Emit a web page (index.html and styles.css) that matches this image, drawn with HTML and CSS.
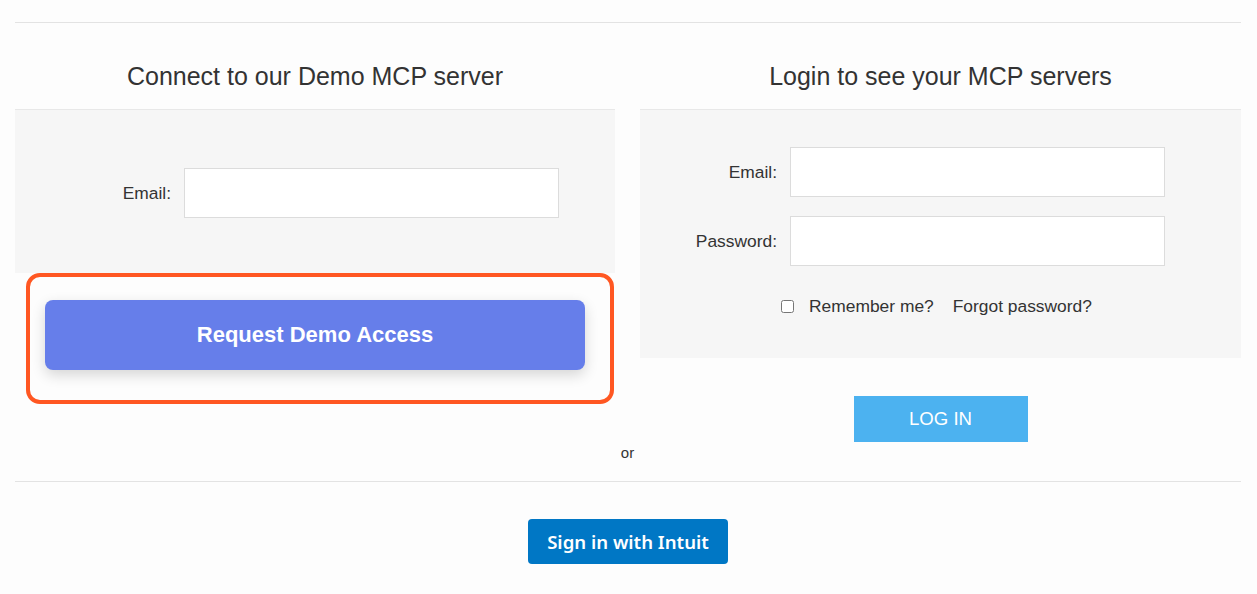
FILE: index.html
```html
<!DOCTYPE html>
<html lang="en">
<head>
  <meta charset="UTF-8" />
  <meta name="viewport" content="width=device-width, initial-scale=1.0"/>
  <title>MCP Servers - Sign in</title>
  <link rel="stylesheet" href="styles.css">
</head>
<body>
  <div class="page">
    <hr class="rule top">

    <div class="columns">
      <section class="col">
        <h2>Connect to our Demo MCP server</h2>
        <div class="panel demo">
          <div class="row">
            <label for="demo-email">Email:</label>
            <input id="demo-email" type="email">
          </div>
        </div>
        <div class="highlight">
          <button class="demo-btn">Request Demo Access</button>
        </div>
      </section>

      <div class="or"><span>or</span></div>

      <section class="col right">
        <h2>Login to see your MCP servers</h2>
        <div class="panel login">
          <div class="row">
            <label for="email">Email:</label>
            <input id="email" type="email">
          </div>
          <div class="row">
            <label for="password">Password:</label>
            <input id="password" type="password">
          </div>
          <div class="options">
            <input id="remember" type="checkbox">
            <label for="remember">Remember me?</label>
            <a href="#">Forgot password?</a>
          </div>
        </div>
        <button class="login-btn">LOG IN</button>
      </section>
    </div>

    <hr class="rule bottom">

    <div class="external">
      <button class="intuit-btn">Sign in with Intuit</button>
    </div>
  </div>
</body>
</html>
```

FILE: styles.css
```css
body {
  margin: 0;
  background-color: #fdfdfd;
  color: #333;
  font-family: 'Liberation Sans', Arial, sans-serif;
}
.page {
  width: 1226px;
  margin-left: 15px;
}
.rule {
  border: none;
  border-top: 1px solid #e3e3e3;
  margin: 0;
}
.rule.top {
  margin-top: 22px;
}
.rule.bottom {
  margin-top: 20px;
}
.columns {
  display: grid;
  grid-template-columns: 600px 25px 601px;
}
h2 {
  margin: 0;
  padding: 39px 0 19px;
  font-size: 25px;
  line-height: 28px;
  font-weight: normal;
  text-align: center;
  color: #333;
}
.panel {
  background-color: #f6f6f6;
  border-top: 1px solid #e8e8e8;
}
.row {
  display: flex;
  align-items: center;
}
.row label {
  width: 100px;
  margin-right: 13px;
  text-align: right;
  font-size: 17.4px;
}
.row input {
  width: 375px;
  height: 50px;
  box-sizing: border-box;
  border: 1px solid #dcdcdc;
  background-color: #fff;
  font-size: 16px;
  padding: 0 10px;
}
.demo {
  padding: 58px 0 55px 56px;
}
.login {
  padding: 37px 0 42px 37px;
}
.login .row + .row {
  margin-top: 19px;
}
.options {
  display: flex;
  align-items: center;
  justify-content: center;
  margin-top: 30px;
  margin-left: -45px;
  font-size: 17.4px;
  line-height: 20px;
}
.options input {
  width: 13px;
  height: 13px;
  margin: 0 15px 0 0;
}
.options a {
  color: #333;
  text-decoration: none;
  margin-left: 19px;
}
.highlight {
  margin: 0 1px 0 11px;
  padding: 23px 25px 30px 15px;
  border: 4px solid #ff5722;
  border-radius: 14px;
}
.demo-btn {
  display: block;
  width: 100%;
  height: 70px;
  border: none;
  border-radius: 8px;
  background-color: #667eea;
  color: #fff;
  font-family: 'Liberation Sans', Arial, sans-serif;
  font-size: 22px;
  font-weight: bold;
  box-shadow: 0 5px 14px rgba(0, 0, 0, 0.16);
  cursor: pointer;
}
.or {
  display: flex;
  align-items: flex-end;
  justify-content: center;
  font-size: 15px;
  line-height: 16px;
}
.right {
  padding-bottom: 19px;
}
.login-btn {
  display: block;
  margin: 38px auto 0;
  width: 174px;
  height: 46px;
  border: none;
  background-color: #4cb2f0;
  color: #fff;
  font-family: 'Liberation Sans', Arial, sans-serif;
  font-size: 18.6px;
  cursor: pointer;
}
.external {
  display: flex;
  justify-content: center;
  padding-top: 37px;
}
.intuit-btn {
  width: 200px;
  height: 45px;
  border: none;
  border-radius: 4px;
  background-color: #0077c5;
  color: #fff;
  font-family: 'Noto Sans', sans-serif;
  font-size: 18.6px;
  font-weight: 600;
  cursor: pointer;
}
```
